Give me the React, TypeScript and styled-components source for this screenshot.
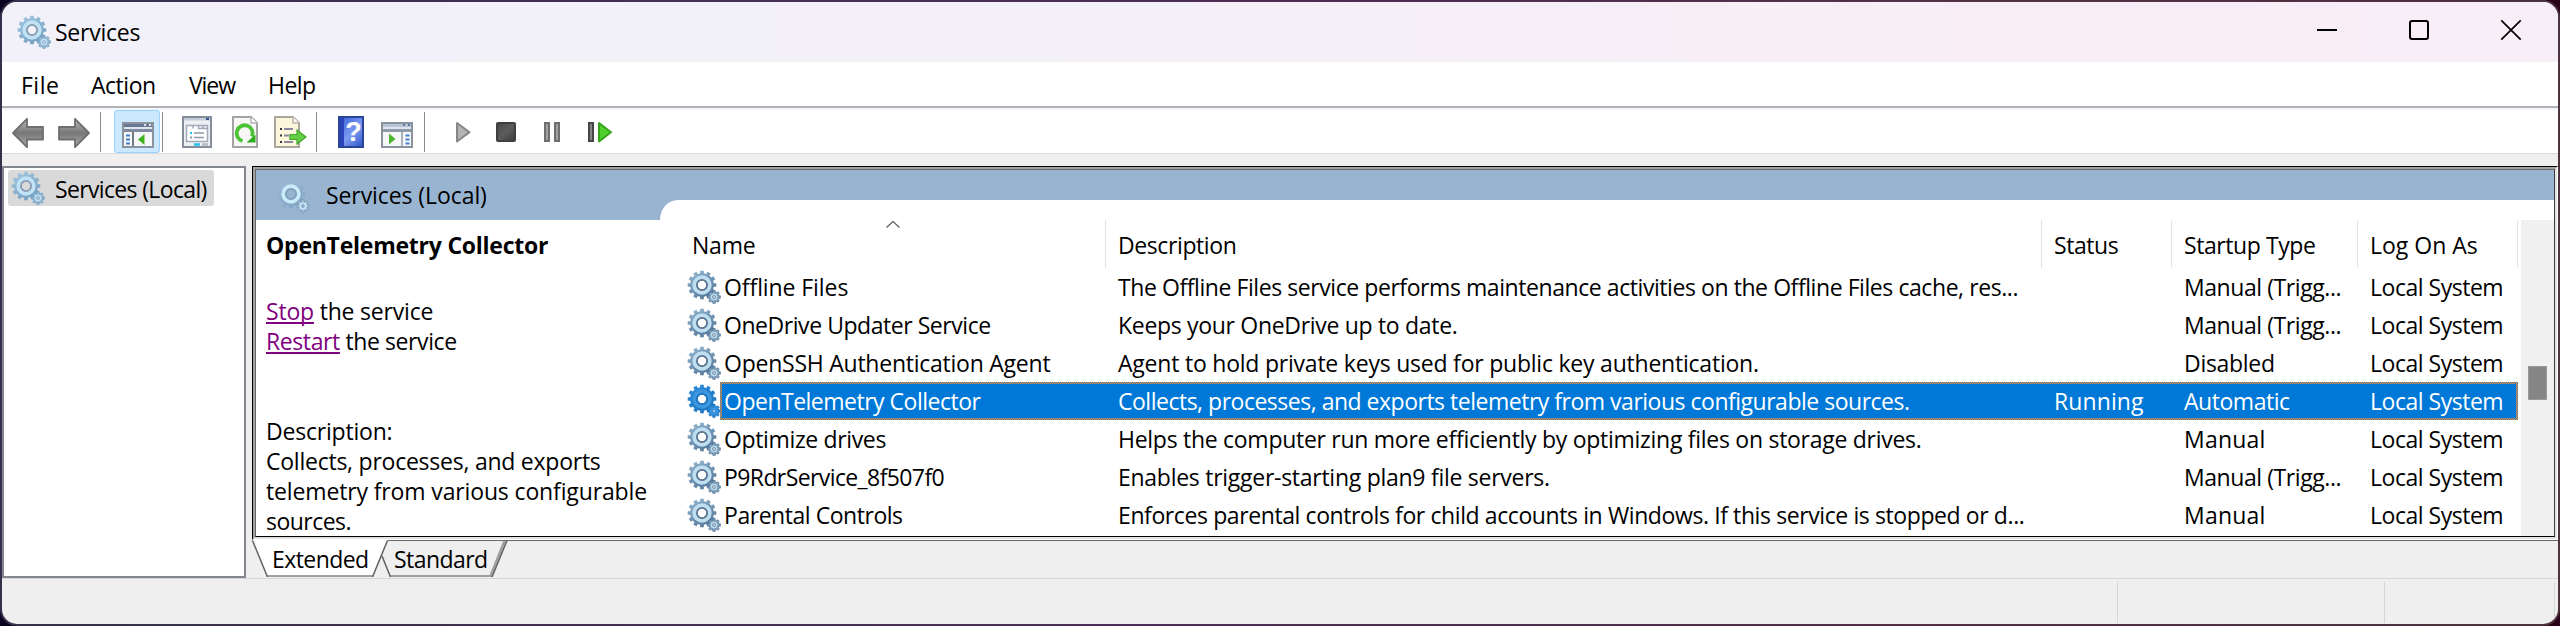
import React from 'react';
import styled, { createGlobalStyle, css } from 'styled-components';

const GlobalStyle = createGlobalStyle`
  * { box-sizing: border-box; }
  body {
    margin: 0;
    overflow: hidden;
    background: #14061f;
    color: #000;
    font-family: 'Open Sans', 'Noto Sans', sans-serif;
    font-size: 23px;
    line-height: 31px;
  }
  svg { display: block; overflow: visible; flex: none; }
`;

/* ---------- window chrome ---------- */

const Desktop = styled.div`
  height: 626px;
  background: linear-gradient(90deg, #0b0322, #1a0420 50%, #2a0116);
`;

const WindowFrame = styled.div`
  height: 626px;
  padding: 2px;
  border-radius: 17px;
  background: linear-gradient(90deg, #37304d, #4b2e59 45%, #553046 75%, #4d3340);
`;

const WindowBody = styled.div`
  display: flex;
  flex-direction: column;
  height: 622px;
  border-radius: 15px;
  overflow: hidden;
  background: #efefef;
`;

const TitleBar = styled.header`
  display: flex;
  align-items: center;
  height: 60px;
  padding: 0 37px 0 16px;
  background: linear-gradient(90deg, #f2f0f8, #f3f0f8 35%, #f9eef6 80%, #f8eef7);
`;

const Text = styled.span<{ $track?: number }>`
  white-space: pre;
  letter-spacing: ${(p) => p.$track ?? 0}px;
`;

const WindowTitle = styled(Text)`
  margin-left: 5px;
  flex: 1;
`;

const WindowControls = styled.div`
  display: flex;
  gap: 72px;
  margin-top: -4px;
`;

const MenuBar = styled.nav`
  display: flex;
  height: 44px;
  padding: 8px 0 0 19px;
  background: #fff;
`;

const MenuItem = styled.div<{ $width: number }>`
  width: ${(p) => p.$width}px;
`;

const Toolbar = styled.div`
  display: flex;
  height: 48px;
  padding-left: 3px;
  border-top: 2px solid #b3b3b3;
  border-bottom: 1px solid #dadada;
  background: linear-gradient(#f1f7fd 2px, #fff 2px);
`;

const ToolButton = styled.div<{ $active?: boolean }>`
  width: 46px;
  height: 43px;
  margin-top: 2px;
  padding: 6px 7px;
  ${(p) =>
    p.$active &&
    css`
      padding: 5px 7px;
      border: 1px solid #99d1ff;
      border-radius: 3px;
      background: #cce8ff;
    `}
`;

const Separator = styled.div<{ $before: number; $after: number }>`
  width: 1px;
  height: 40px;
  margin: 4px ${(p) => p.$after}px 0 ${(p) => p.$before}px;
  background: #8d8d8d;
`;

/* ---------- main area ---------- */

const Main = styled.main`
  display: flex;
  gap: 6px;
  height: 412px;
  margin-top: 12px;
`;

const TreePane = styled.aside`
  width: 244px;
  padding: 2px 4px;
  border: 2px solid #828790;
  background: #fff;
`;

const TreeItem = styled.div`
  display: flex;
  align-items: center;
  gap: 11px;
  width: 206px;
  height: 36px;
  padding-left: 4px;
  border-radius: 3px;
  background: #d9d9d9;
`;

const TreeLabel = styled(Text)`
  padding-top: 2px;
`;

const RightPane = styled.section`
  flex: 1;
`;

const OuterFrame = styled.div`
  height: 374px;
  border: 1px solid;
  border-color: #000 #fff #fff #000;
`;

const MiddleFrame = styled.div`
  height: 372px;
  border: 2px solid;
  border-color: #a0a0a0 #e3e3e3 #e3e3e3 #a0a0a0;
`;

const InnerFrame = styled.div`
  height: 368px;
  border: 1px solid;
  border-color: #696969 #3c3c3c #000 #696969;
  background: #fff;
  overflow: hidden;
`;

const Banner = styled.div`
  display: flex;
  height: 50px;
  background: #99b4d1;
`;

const BannerTitle = styled.div`
  display: flex;
  align-items: center;
  gap: 17px;
  width: 404px;
  padding: 1px 0 0 21px;
`;

const BannerCutout = styled.div`
  flex: 1;
  margin-top: 30px;
  border-top-left-radius: 18px 20px;
  background: #fff;
`;

const Content = styled.div`
  display: flex;
  height: 316px;
`;

const Detail = styled.div`
  width: 432px;
  padding: 10px 0 0 10px;
  line-height: 30px;
`;

const DetailHeading = styled.div`
  height: 66px;
  font-weight: 700;
`;

const DetailActions = styled.div`
  height: 120px;
`;

const Line = styled.div<{ $track?: number }>`
  height: 30px;
  white-space: pre;
  letter-spacing: ${(p) => p.$track ?? 0}px;
`;

const Action = styled.a`
  color: #800080;
  text-decoration: underline;
  text-decoration-thickness: 2px;
  text-underline-offset: 2px;
  text-decoration-skip-ink: none;
`;

const List = styled.div`
  width: 1830px;
`;

const ListHeader = styled.div`
  position: relative;
  display: grid;
  grid-template-columns: 418px 936px 130px 186px 160px;
  height: 48px;
`;

const HeaderCell = styled.div<{ $first?: boolean }>`
  padding: 10px 0 0 ${(p) => (p.$first ? 4 : 12)}px;
  border-right: 1px solid #e3e3e3;
`;

const SortMark = styled.div`
  position: absolute;
  left: 198px;
  top: 1px;
`;

const Row = styled.div`
  display: flex;
  align-items: center;
  height: 38px;
`;

const RowCells = styled.div<{ $selected?: boolean }>`
  display: grid;
  grid-template-columns: 384px 936px 130px 186px 158px;
  align-items: center;
  width: 1798px;
  height: 38px;
  border: 2px solid transparent;
  ${(p) =>
    p.$selected &&
    css`
      color: #fff;
      background:
        linear-gradient(#0078d7, #0078d7) padding-box,
        repeating-conic-gradient(#f08a35 0 25%, #3a80b4 0 50%) 0 0 / 2px 2px border-box;
    `}
`;

const Cell = styled(Text)<{ $first?: boolean }>`
  padding-left: ${(p) => (p.$first ? 2 : 12)}px;
`;

const ScrollTrack = styled.div`
  width: 33px;
  margin-left: 3px;
  padding: 146px 7px 0;
  background: #f0f0f0;
`;

const ScrollThumb = styled.div`
  width: 19px;
  height: 34px;
  border: 1px solid #999;
  background: #858585;
`;

const TabStrip = styled.div`
  display: flex;
  height: 38px;
  background: linear-gradient(#696969 1px, transparent 1px);
`;

const Tab = styled.div<{ $width: number; $indent: number }>`
  position: relative;
  width: ${(p) => p.$width}px;
  padding: 4px 0 0 ${(p) => p.$indent}px;
`;

const TabShape = styled.svg`
  position: absolute;
  left: 0;
  top: 0;
`;

const TabLabel = styled(Text)`
  position: relative;
`;

const StatusBar = styled.footer`
  display: grid;
  grid-template-columns: 2116px 267px 170px;
  height: 46px;
  padding-top: 3px;
  border-top: 1px solid #d7d7d7;
`;

const StatusCell = styled.div`
  height: 41px;
  border-right: 1px solid #d5d5d5;
`;

/* ---------- icons ---------- */

const gearPath = (cx: number, cy: number, outer: number, inner: number, teeth: number) => {
  const step = (Math.PI * 2) / teeth;
  const at = (r: number, a: number) =>
    `${(cx + r * Math.cos(a)).toFixed(2)} ${(cy + r * Math.sin(a)).toFixed(2)}`;
  let d = '';
  for (let i = 0; i < teeth; i++) {
    const a = i * step;
    d += `${i ? 'L' : 'M'}${at(inner, a - step * 0.3)}L${at(outer, a - step * 0.24)}L${at(outer, a + step * 0.24)}L${at(inner, a + step * 0.3)}`;
  }
  return d + 'Z';
};

const BIG_GEAR = gearPath(14, 14, 14.4, 11.9, 12);
const SMALL_GEAR = gearPath(26, 26, 6.4, 4.8, 8);

const hole = (cx: number, cy: number, r: number) =>
  `M${cx - r} ${cy}a${r} ${r} 0 1 0 ${2 * r} 0a${r} ${r} 0 1 0 ${-2 * r} 0Z`;

type GearTone = 'list' | 'soft' | 'banner' | 'selected';

const GEAR_TONES: Record<GearTone, [string, string, string, string, string]> = {
  list: ['#94b8d2', '#56799c', '#bfdff1', '#5d7692', '#84a5be'],
  soft: ['#a3cae3', '#74a0c2', '#c2e3f5', '#8a9fb3', '#96bad2'],
  banner: ['#9fc0da', '#7a9dbd', '#c9ecfa', '#7f9fbb', '#a9c3d9'],
  selected: ['#2d8cdb', '#1c76c4', '#3c97df', '#1c73c0', '#2f8ad8'],
};

const GearIcon = ({ tone = 'list' }: { tone?: GearTone }) => {
  const [light, dark, ring, edge, small] = GEAR_TONES[tone];
  return (
    <svg width="32" height="32" viewBox="0 0 32 32">
      <defs>
        <linearGradient id={`gear-${tone}`} x1="0" y1="0" x2="0.6" y2="1">
          <stop offset="0" stopColor={light} />
          <stop offset="1" stopColor={dark} />
        </linearGradient>
      </defs>
      <path
        d={BIG_GEAR + hole(14, 14, 4.6)}
        fill={`url(#gear-${tone})`}
        fillRule="evenodd"
        opacity={tone === 'banner' ? 0.7 : 1}
      />
      <circle cx="14" cy="14" r="7.7" fill="none" stroke={ring} strokeWidth="4" />
      <circle cx="14" cy="14" r="5.1" fill="none" stroke={edge} strokeWidth="1.8" />
      <path
        d={SMALL_GEAR + hole(26, 26, 1.4)}
        fill={small}
        fillRule="evenodd"
        stroke={dark}
        strokeWidth="0.9"
      />
      <circle cx="26" cy="26" r="2.6" fill="none" stroke={ring} strokeWidth="1.3" />
    </svg>
  );
};

const ArrowIcon = ({ flip }: { flip?: boolean }) => (
  <svg width="32" height="32" viewBox="0 0 32 32">
    <defs>
      <linearGradient id="arrow" x1="0" y1="0" x2="0" y2="1">
        <stop offset="0" stopColor="#bababa" />
        <stop offset="0.5" stopColor="#777" />
        <stop offset="1" stopColor="#adadad" />
      </linearGradient>
    </defs>
    <path
      transform={flip ? 'translate(32 0) scale(-1 1)' : undefined}
      d="M1 17L15 2.800V11H31V23.500H15V31.200Z"
      fill="url(#arrow)"
      stroke="#6e6e6e"
      strokeWidth="1.8"
      strokeLinejoin="round"
    />
  </svg>
);

const PaneIcon = ({ mirrored }: { mirrored?: boolean }) => (
  <svg width="32" height="32" viewBox="0 0 32 32">
    <rect x="1" y="7" width="30" height="24" fill="#f6f7f9" stroke="#8a929e" strokeWidth="2" />
    <rect x="2" y="8" width="28" height="3" fill={mirrored ? '#b9c4d4' : '#6a7790'} />
    <rect x="2" y="11" width="28" height="2" fill="#dfe5ee" />
    <rect x="2" y="13" width="28" height="3" fill={mirrored ? '#8e99aa' : '#7f8aa0'} />
    <path d="M22 9h2M27 9h2" stroke={mirrored ? '#5c7aa8' : '#dfe6f2'} strokeWidth="2" />
    {mirrored ? (
      <>
        <path d="M21 16V30" stroke="#a9b0ba" strokeWidth="2" />
        <path d="M24.5 19.5h4M24.5 23.5h4M24.5 27.5h4" stroke="#3f7fd0" strokeWidth="2" />
        <path d="M8 17.5L14.5 23L8 28.5Z" fill="#4db32a" />
      </>
    ) : (
      <>
        <path d="M11 16V30" stroke="#707a89" strokeWidth="2" />
        <path d="M4 19.5h4M4 23.5h4M4 27.5h4" stroke="#3f7fd0" strokeWidth="2" />
        <path d="M22.5 18V29L16 23.5Z" fill="#43b31d" />
      </>
    )}
  </svg>
);

const PropertiesIcon = () => (
  <svg width="32" height="32" viewBox="0 0 32 32">
    <rect x="2" y="1" width="28" height="30" fill="#eef0f3" stroke="#858c9a" strokeWidth="2" />
    <rect x="3" y="2" width="26" height="2.5" fill="#c3ccdb" />
    <path d="M25 3h3" stroke="#31558c" strokeWidth="2" />
    <path d="M5.500 9.500H17.500V12.500H26.500V25.500H5.500Z" fill="#fff" stroke="#a2a9b8" strokeWidth="1.5" />
    <path d="M12 9.500V12.500M17.500 9.500H26.500V12.500M22 9.500V12.500" fill="none" stroke="#a2a9b8" strokeWidth="1.5" />
    <path d="M13 17h10M13 21.500h10" stroke="#9098a8" strokeWidth="1.500" />
    <path d="M9 17h2" stroke="#18c3f5" strokeWidth="2" />
    <path d="M9 21.500h2" stroke="#8d96a8" strokeWidth="2" />
    <path d="M13 28.500h6" stroke="#20c4ee" strokeWidth="2.400" />
    <path d="M21 28.500h6" stroke="#b3bac5" strokeWidth="2.400" />
  </svg>
);

const RefreshIcon = () => (
  <svg width="32" height="32" viewBox="0 0 32 32">
    <path d="M6 1H24L30 7V31H6Z" fill="#f7f7f6" stroke="#a3a3a3" strokeWidth="2" />
    <path d="M24 1V7H30" fill="#fff" stroke="#b3b3b3" strokeWidth="1.500" />
    <path d="M15.500 25A8 8 0 1 1 25 20.500" fill="none" stroke="#4cc237" strokeWidth="3.800" />
    <path d="M28.500 18.500V26.500H19.500Z" fill="#2fae1d" />
  </svg>
);

const ExportIcon = () => (
  <svg width="32" height="32" viewBox="0 0 32 32">
    <path d="M2 1H20L26 7V31H2Z" fill="#fcf6dc" stroke="#a8a69c" strokeWidth="2" />
    <path d="M20 1V7H26" fill="#fff" stroke="#b5b3aa" strokeWidth="1.500" />
    <path d="M7 13h2M7 19.500h2M7 26h2" stroke="#33333d" strokeWidth="2" />
    <path d="M11 13h9M11 19.500h5M11 26h9" stroke="#8b87a0" strokeWidth="2" />
    <path d="M17 18.500h7V14l9 7l-9 7v-4.500h-7Z" fill="#62cf45" stroke="#41a92c" strokeWidth="1.200" />
  </svg>
);

const HelpBook = styled.div`
  display: flex;
  justify-content: center;
  width: 26px;
  height: 32px;
  margin-left: 3px;
  padding-left: 5px;
  border: 2px solid #2b449b;
  background: linear-gradient(90deg, #2b46b8 4px, transparent 4px), linear-gradient(135deg, #3c62d8, #7d9cf0 55%, #3558cc);
  color: #fff;
  font-family: 'Liberation Sans', sans-serif;
  font-weight: 700;
  font-size: 27px;
  line-height: 29px;
`;

const PlayIcon = () => (
  <svg width="32" height="32" viewBox="0 0 32 32">
    <path d="M10 7V25.500L22.500 16.200Z" fill="#b4b4b4" stroke="#868686" strokeWidth="2" strokeLinejoin="round" />
  </svg>
);

const StopIcon = () => (
  <svg width="32" height="32" viewBox="0 0 32 32">
    <defs>
      <linearGradient id="stop" x1="0" y1="0" x2="1" y2="1">
        <stop offset="0" stopColor="#484848" />
        <stop offset="0.5" stopColor="#5c5c5c" />
        <stop offset="1" stopColor="#3c3c3c" />
      </linearGradient>
    </defs>
    <rect x="4" y="7" width="18" height="18" rx="1" fill="url(#stop)" stroke="#3f3f3f" strokeWidth="2" />
  </svg>
);

const PauseIcon = () => (
  <svg width="32" height="32" viewBox="0 0 32 32">
    <rect x="6" y="7" width="4" height="18" fill="#a0a0a0" stroke="#6f6f6f" strokeWidth="2" />
    <rect x="16" y="7" width="4" height="18" fill="#a0a0a0" stroke="#6f6f6f" strokeWidth="2" />
  </svg>
);

const RestartIcon = () => (
  <svg width="32" height="32" viewBox="0 0 32 32">
    <rect x="4" y="7" width="4" height="18" fill="#858585" stroke="#454545" strokeWidth="2" />
    <path d="M14 7V25.500L26 16.200Z" fill="#4fd02e" stroke="#36a51b" strokeWidth="2" strokeLinejoin="round" />
  </svg>
);

/* ---------- data ---------- */

type Entry = [text: string, track: number];

const MANUAL: Entry = ['Manual', 0.21];
const TRIGGER: Entry = ['Manual (Trigg...', -0.43];

const services: { name: Entry; description: Entry; status?: Entry; startup: Entry; selected?: boolean }[] = [
  {
    name: ['Offline Files', -0.08],
    description: ['The Offline Files service performs maintenance activities on the Offline Files cache, res...', -0.43],
    startup: TRIGGER,
  },
  {
    name: ['OneDrive Updater Service', -0.45],
    description: ['Keeps your OneDrive up to date.', -0.31],
    startup: TRIGGER,
  },
  {
    name: ['OpenSSH Authentication Agent', -0.24],
    description: ['Agent to hold private keys used for public key authentication.', -0.22],
    startup: ['Disabled', -0.29],
  },
  {
    name: ['OpenTelemetry Collector', -0.5],
    description: ['Collects, processes, and exports telemetry from various configurable sources.', -0.49],
    status: ['Running', 0.1],
    startup: ['Automatic', -0.47],
    selected: true,
  },
  {
    name: ['Optimize drives', -0.36],
    description: ['Helps the computer run more efficiently by optimizing files on storage drives.', -0.28],
    startup: MANUAL,
  },
  {
    name: ['P9RdrService_8f507f0', -0.6],
    description: ['Enables trigger-starting plan9 file servers.', -0.27],
    startup: TRIGGER,
  },
  {
    name: ['Parental Controls', -0.46],
    description: ['Enforces parental controls for child accounts in Windows. If this service is stopped or d...', -0.4],
    startup: MANUAL,
  },
];

const columns: Entry[] = [
  ['Name', -0.23],
  ['Description', -0.4],
  ['Status', -0.44],
  ['Startup Type', -0.42],
  ['Log On As', 0],
];

const menus: [text: string, track: number, width: number][] = [
  ['File', 0.5, 70],
  ['Action', -0.48, 98],
  ['View', -1.1, 79],
  ['Help', -0.56, 80],
];

export default function App() {
  return (
    <Desktop>
      <GlobalStyle />
      <WindowFrame>
        <WindowBody>
          <TitleBar>
            <GearIcon tone="soft" />
            <WindowTitle $track={-0.24}>Services</WindowTitle>
            <WindowControls>
              <svg width="20" height="20" viewBox="0 0 20 20">
                <path d="M0 10H20" stroke="#000" strokeWidth="2" />
              </svg>
              <svg width="20" height="20" viewBox="0 0 20 20">
                <rect x="1" y="1" width="18" height="18" rx="2" fill="none" stroke="#000" strokeWidth="2" />
              </svg>
              <svg width="20" height="20" viewBox="0 0 20 20">
                <path d="M0.300 0.300L19.700 19.700M19.700 0.300L0.300 19.700" stroke="#000" strokeWidth="1.700" />
              </svg>
            </WindowControls>
          </TitleBar>

          <MenuBar>
            {menus.map(([text, track, width]) => (
              <MenuItem key={text} $width={width}>
                <Text $track={track}>{text}</Text>
              </MenuItem>
            ))}
          </MenuBar>

          <Toolbar>
            <ToolButton><ArrowIcon /></ToolButton>
            <ToolButton><ArrowIcon flip /></ToolButton>
            <Separator $before={3} $after={13} />
            <ToolButton $active><PaneIcon /></ToolButton>
            <Separator $before={2} $after={11} />
            <ToolButton><PropertiesIcon /></ToolButton>
            <ToolButton><RefreshIcon /></ToolButton>
            <ToolButton><ExportIcon /></ToolButton>
            <Separator $before={4} $after={11} />
            <ToolButton><HelpBook>?</HelpBook></ToolButton>
            <ToolButton><PaneIcon mirrored /></ToolButton>
            <Separator $before={4} $after={15} />
            <ToolButton><PlayIcon /></ToolButton>
            <ToolButton><StopIcon /></ToolButton>
            <ToolButton><PauseIcon /></ToolButton>
            <ToolButton><RestartIcon /></ToolButton>
          </Toolbar>

          <Main>
            <TreePane>
              <TreeItem>
                <GearIcon tone="soft" />
                <TreeLabel $track={-0.65}>Services (Local)</TreeLabel>
              </TreeItem>
            </TreePane>

            <RightPane>
              <OuterFrame>
                <MiddleFrame>
                  <InnerFrame>
                    <Banner>
                      <BannerTitle>
                        <GearIcon tone="banner" />
                        <Text $track={-0.08}>Services (Local)</Text>
                      </BannerTitle>
                      <BannerCutout />
                    </Banner>
                    <Content>
                      <Detail>
                        <DetailHeading>
                          <Text $track={-0.24}>OpenTelemetry Collector</Text>
                        </DetailHeading>
                        <DetailActions>
                          <Line $track={-0.2}><Action>Stop</Action> the service</Line>
                          <Line $track={-0.4}><Action>Restart</Action> the service</Line>
                        </DetailActions>
                        <Line $track={-0.2}>Description:</Line>
                        <Line $track={-0.24}>Collects, processes, and exports</Line>
                        <Line $track={-0.14}>telemetry from various configurable</Line>
                        <Line $track={-0.53}>sources.</Line>
                      </Detail>
                      <List>
                        <ListHeader>
                          {columns.map(([text, track], i) => (
                            <HeaderCell key={text} $first={i === 0}>
                              <Text $track={track}>{text}</Text>
                            </HeaderCell>
                          ))}
                          <SortMark>
                            <svg width="14" height="7" viewBox="0 0 14 7">
                              <path d="M0.500 6.500L7 0.500L13.500 6.500" fill="none" stroke="#5a5a5a" strokeWidth="1.200" />
                            </svg>
                          </SortMark>
                        </ListHeader>
                        {services.map(({ name, description, status, startup, selected }) => (
                          <Row key={name[0]}>
                            <GearIcon tone={selected ? 'selected' : 'list'} />
                            <RowCells $selected={selected}>
                              <Cell $first $track={name[1]}>{name[0]}</Cell>
                              <Cell $track={description[1]}>{description[0]}</Cell>
                              <Cell $track={status?.[1]}>{status?.[0]}</Cell>
                              <Cell $track={startup[1]}>{startup[0]}</Cell>
                              <Cell $track={-0.48}>Local System</Cell>
                            </RowCells>
                          </Row>
                        ))}
                      </List>
                      <ScrollTrack>
                        <ScrollThumb />
                      </ScrollTrack>
                    </Content>
                  </InnerFrame>
                </MiddleFrame>
              </OuterFrame>
              <TabStrip>
                <Tab $width={129} $indent={20}>
                  <TabShape width="136" height="38" viewBox="0 0 136 38">
                    <path d="M0 0H136L121 36H15.500Z" fill="#fff" />
                    <path d="M15 36H121" stroke="#a0a0a0" strokeWidth="2" />
                    <path d="M0.500 0.500L15.500 37M120.500 37L135.500 0.500" fill="none" stroke="#606060" strokeWidth="1.500" />
                  </TabShape>
                  <TabLabel $track={-0.57}>Extended</TabLabel>
                </Tab>
                <Tab $width={130} $indent={13}>
                  <TabShape width="128" height="38" viewBox="0 0 128 38">
                    <path d="M9 36H111" stroke="#a0a0a0" strokeWidth="2" />
                    <path d="M109.500 36L123.500 1" stroke="#a0a0a0" strokeWidth="2.500" />
                    <path d="M1 16L9.500 37M111 37L126 0.500" fill="none" stroke="#606060" strokeWidth="1.500" />
                  </TabShape>
                  <TabLabel $track={-0.56}>Standard</TabLabel>
                </Tab>
              </TabStrip>
            </RightPane>
          </Main>

          <StatusBar>
            <StatusCell />
            <StatusCell />
            <StatusCell />
          </StatusBar>
        </WindowBody>
      </WindowFrame>
    </Desktop>
  );
}
